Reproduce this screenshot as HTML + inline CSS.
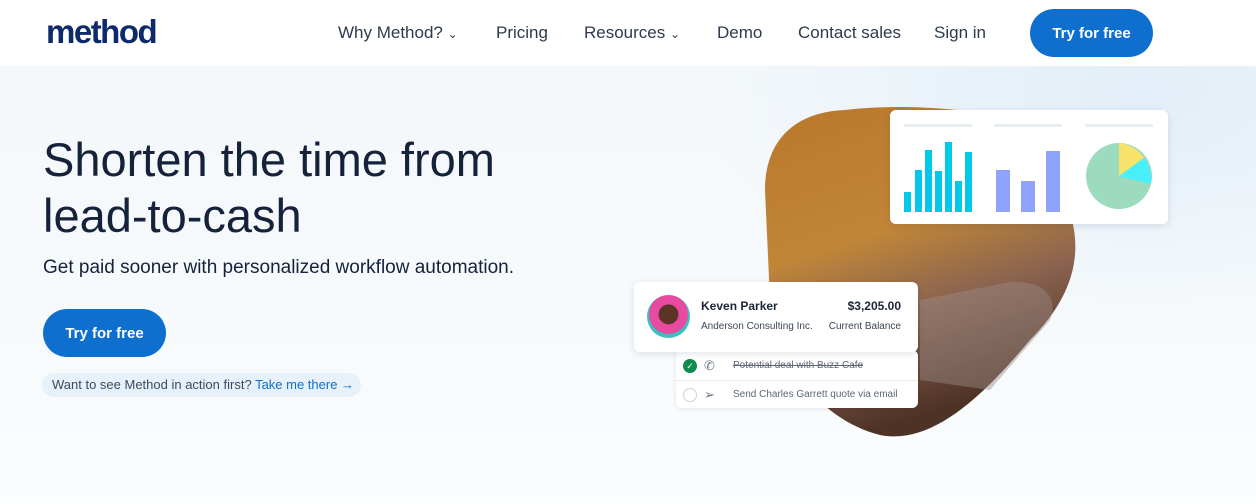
<!DOCTYPE html>
<html><head><meta charset="utf-8"><style>
*{margin:0;padding:0;box-sizing:border-box}
body{width:1256px;height:504px;overflow:hidden;font-family:"Liberation Sans",sans-serif;background:#fff;position:relative}
.hero{position:absolute;top:66px;left:0;width:1256px;height:438px;background:linear-gradient(180deg,#f4f8fb 0%,#f7fafc 60%,#fbfdfe 100%)}
.hero:after{content:"";position:absolute;right:0;top:0;width:560px;height:260px;background:radial-gradient(ellipse at 80% 10%,#e2eef8 0%,rgba(230,240,248,0) 70%)}
nav{position:absolute;top:0;left:0;width:1256px;height:66px;background:#fff}
.logo{position:absolute;left:46px;top:13px;font-size:33px;font-weight:bold;color:#0d2a6b;letter-spacing:-1.5px}
.nl{position:absolute;top:23px;font-size:17px;color:#2d3a4d}
.btn{position:absolute;background:#0e6fce;color:#fff;font-size:15px;font-weight:bold;border-radius:24px;text-align:center}
h1{position:absolute;left:43px;top:132px;font-size:47px;line-height:56px;font-weight:normal;color:#15223a;letter-spacing:0}
.sub{position:absolute;left:43px;top:257px;font-size:19px;color:#15223a}
.pill{position:absolute;left:42px;top:373px;width:319px;height:24px;border-radius:12px;background:#e6f1f9;font-size:13px;color:#3b4a5e;line-height:24px;padding-left:10px}
.pill span{color:#0e6fce}
.card{position:absolute;background:#fff;border-radius:6px;box-shadow:0 2px 8px rgba(20,40,80,.12)}
.t{position:absolute;font-size:11px;color:#3a4656;white-space:nowrap}
</style></head><body>
<div class="hero"></div>
<nav>
<div class="logo">method</div>
<div class="nl" style="left:338px">Why Method? <span style="font-size:12px">&#8964;</span></div>
<div class="nl" style="left:496px">Pricing</div>
<div class="nl" style="left:584px">Resources <span style="font-size:12px">&#8964;</span></div>
<div class="nl" style="left:717px">Demo</div>
<div class="nl" style="left:798px">Contact sales</div>
<div class="nl" style="left:934px">Sign in</div>
<div class="btn" style="left:1030px;top:9px;width:123px;height:48px;line-height:50px">Try for free</div>
</nav>
<h1>Shorten the time from<br>lead-to-cash</h1>
<div class="sub">Get paid sooner with personalized workflow automation.</div>
<div class="btn" style="left:43px;top:309px;width:123px;height:48px;line-height:50px">Try for free</div>
<div class="pill">Want to see Method in action first? <span>Take me there &#8594;</span></div>
<svg style="position:absolute;left:0;top:0" width="1256" height="504">
<defs><linearGradient id="g" x1="0" y1="0" x2="0.3" y2="1">
<stop offset="0" stop-color="#b9782c"/><stop offset=".45" stop-color="#c08638"/><stop offset=".7" stop-color="#8a6350"/><stop offset="1" stop-color="#4e3226"/></linearGradient></defs>
<path d="M845 110 C795 112 765 140 765 190 L770 300 C775 360 820 420 880 435 C930 445 980 400 1030 340 C1070 300 1082 260 1072 220 L1010 120 C960 105 880 105 845 110 Z" fill="url(#g)"/>
<path d="M920 300 L1010 282 C1040 280 1060 295 1050 320 L990 390 L920 380 Z" fill="#9c8b84" opacity=".45"/>
</svg>
<div class="card" style="left:890px;top:110px;width:278px;height:114px">
<svg width="278" height="114" style="position:absolute;left:0;top:0">
<g fill="#e6eef2"><rect x="14" y="14" width="68" height="3"/><rect x="104" y="14" width="68" height="3"/><rect x="195" y="14" width="68" height="3"/></g>
<g fill="#00c8e8"><rect x="14" y="82" width="7" height="20"/><rect x="25" y="60" width="7" height="42"/><rect x="35" y="40" width="7" height="62"/><rect x="45" y="61" width="7" height="41"/><rect x="55" y="32" width="7" height="70"/><rect x="65" y="71" width="7" height="31"/><rect x="75" y="42" width="7" height="60"/></g>
<g fill="#8fa3fb"><rect x="106" y="60" width="14" height="42"/><rect x="131" y="71" width="14" height="31"/><rect x="156" y="41" width="14" height="61"/></g>
<circle cx="229" cy="66" r="33" fill="#9ddbbf"/>
<path d="M229 66 L229 33 A33 33 0 0 1 254 48 Z" fill="#f7e36a"/>
<path d="M229 66 L254 48 A33 33 0 0 1 261 74 Z" fill="#49f0fc"/>
</svg></div>
<div class="card" style="left:676px;top:350px;width:242px;height:58px;box-shadow:0 1px 4px rgba(20,40,80,.1)">
<div style="position:absolute;left:0;top:30px;width:242px;border-top:1px solid #e8ecef"></div>
<div style="position:absolute;left:7px;top:9px;width:14px;height:14px;border-radius:7px;background:#118a4e;color:#fff;font-size:9px;text-align:center;line-height:14px">✓</div>
<div style="position:absolute;left:7px;top:38px;width:14px;height:14px;border-radius:7px;border:1px solid #ccd3d9"></div>
<div class="t" style="left:28px;top:8px;font-size:13px;color:#6b7785">✆</div>
<div class="t" style="left:28px;top:37px;font-size:13px;color:#6b7785">➢</div>
<div class="t" style="left:57px;top:10px;text-decoration:line-through;color:#5a6675;font-size:10px">Potential deal with Buzz Cafe</div>
<div class="t" style="left:57px;top:39px;color:#5a6675;font-size:10px">Send Charles Garrett quote via email</div>
</div>
<div class="card" style="left:634px;top:282px;width:284px;height:70px">
<div style="position:absolute;left:13px;top:13px;width:43px;height:43px;border-radius:50%;background:radial-gradient(circle at 50% 45%,#5a3424 0 30%,#e84aa0 32% 60%,#3ac0c0 62%)"></div>
<div class="t" style="left:67px;top:17px;font-weight:bold;font-size:12px;color:#1b2535">Keven Parker</div>
<div class="t" style="left:67px;top:39px;font-size:10px">Anderson Consulting Inc.</div>
<div class="t" style="right:17px;top:17px;font-weight:bold;font-size:12px;color:#1b2535">$3,205.00</div>
<div class="t" style="right:17px;top:39px;font-size:10px">Current Balance</div>
</div>
</body></html>
